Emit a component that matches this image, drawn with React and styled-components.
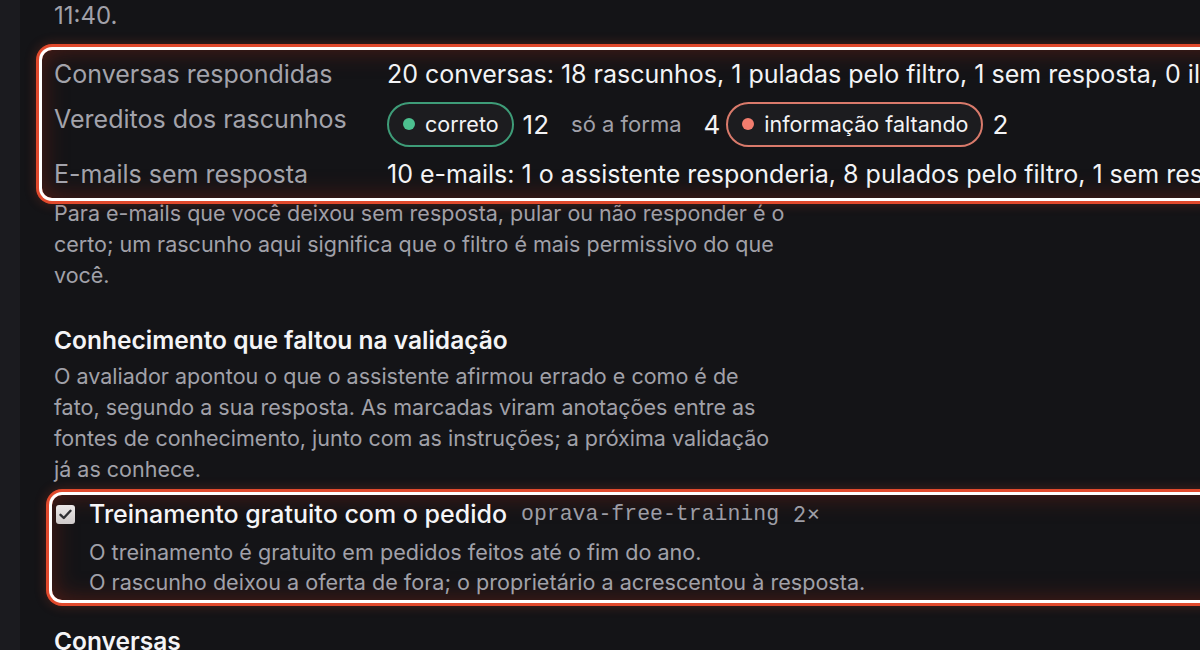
import React from "react";
import styled, { createGlobalStyle } from "styled-components";

const GlobalStyle = createGlobalStyle`
  html, body {
    margin: 0;
    padding: 0;
    background: #141417;
    overflow: hidden;
  }
  body {
    font-family: Inter, "Noto Sans", sans-serif;
    color: #f1f1f3;
  }
`;

const Shell = styled.div`
  display: flex;
  height: 650px;
`;

const Rail = styled.div`
  width: 20px;
  flex: none;
  background: #1b1b1f;
`;

const Main = styled.main`
  flex: none;
  width: 1500px;
  padding-left: 34px;
`;

// paragraphs keep the line breaks of the original page
const Text = styled.p`
  margin: ${(p) => p.$mt || 0}px 0 0;
  font-size: ${(p) => p.$size || 21.5}px;
  line-height: 31px;
  color: #a1a1a9;
  white-space: nowrap;
`;

const Heading = styled.h2`
  margin: ${(p) => p.$mt || 0}px 0 0;
  font-size: 24.5px;
  line-height: 31px;
  font-weight: 600;
  color: #f4f4f6;
`;

const Highlight = styled.div`
  position: relative;
  margin: ${(p) => p.$mt}px 0 0 ${(p) => -p.$pl}px;
  padding: ${(p) => p.$pad};
  border-radius: 10px;
  box-shadow: 0 0 0 3px #ffffff, 0 0 0 6px #e14a2d,
    0 0 12px 6px rgba(225, 74, 45, 0.25),
    inset 0 0 24px rgba(140, 35, 20, 0.5);
`;

const Stats = styled.div`
  display: grid;
  grid-template-columns: 333px auto;
  grid-template-rows: 36px 58px 36px;
  row-gap: 3px;
  align-items: center;
  white-space: nowrap;
`;

const Label = styled.div`
  font-size: 25px;
  color: #a3a3ab;
  align-self: ${(p) => (p.$up ? "start" : "center")};
  padding-top: ${(p) => (p.$up ? "9px" : "0")};
`;

const Value = styled.div`
  font-size: 25px;
  color: #f3f3f5;
`;

const Verdicts = styled.div`
  display: flex;
  align-items: center;
  gap: 6px;
`;

const Verdict = styled.div`
  display: flex;
  align-items: center;
`;

const Chip = styled.span`
  display: inline-flex;
  align-items: center;
  gap: 10px;
  height: 45px;
  box-sizing: border-box;
  padding: 0 ${(p) => (p.$tone ? 13 : 11)}px 0 14px;
  border-radius: 23px;
  border: 2px solid ${(p) => p.$tone || "transparent"};
  background: ${(p) => (p.$tone ? "#1c1c1f" : "transparent")};
  font-size: ${(p) => (p.$tone ? 21.5 : 22)}px;
  color: ${(p) => (p.$tone ? "#f3f3f5" : "#a1a1a9")};
`;

const Dot = styled.i`
  width: 12px;
  height: 12px;
  border-radius: 50%;
  background: ${(p) => p.$color};
`;

const Count = styled.span`
  margin-left: 9px;
  font-size: 26px;
  color: #f3f3f5;
`;

const FactHead = styled.div`
  display: flex;
  align-items: center;
  height: 36px;
  white-space: nowrap;
`;

const Check = styled.span`
  width: 19px;
  height: 19px;
  flex: none;
  margin-right: 14px;
  border-radius: 3px;
  background: linear-gradient(#ece8e8, #cfcaca);
  display: flex;
  align-items: center;
  justify-content: center;
`;

const FactTitle = styled.span`
  font-size: 25px;
  font-weight: 500;
  color: #f5f5f7;
`;

const Slug = styled.code`
  margin-left: 14px;
  font-family: "Liberation Mono", monospace;
  font-size: 21.5px;
  color: #9d9da5;
`;

const Times = styled.span`
  margin-left: 14px;
  font-size: 21.5px;
  color: #9d9da5;
`;

const FactBody = styled.div`
  margin: 5px 0 0 33px;
  font-size: 21.6px;
  line-height: 30px;
  color: #a1a1a9;
  white-space: nowrap;
`;

export default function App() {
  return (
    <>
      <GlobalStyle />
      <Shell>
        <Rail />
        <Main>
          <Text $size={24}>11:40.</Text>

          <Highlight $mt={19} $pl={12} $pad="6px 12px 6px">
            <Stats>
              <Label>Conversas respondidas</Label>
              <Value>
                20 conversas: 18 rascunhos, 1 puladas pelo filtro, 1 sem resposta, 0 ilegíveis
              </Value>
              <Label $up>Vereditos dos rascunhos</Label>
              <Verdicts>
                <Verdict>
                  <Chip $tone="#3e9c78">
                    <Dot $color="#4cc08f" />
                    correto
                  </Chip>
                  <Count>12</Count>
                </Verdict>
                <Verdict>
                  <Chip>só a forma</Chip>
                  <Count>4</Count>
                </Verdict>
                <Verdict>
                  <Chip $tone="#d97a6b">
                    <Dot $color="#f27d6e" />
                    informação faltando
                  </Chip>
                  <Count>2</Count>
                </Verdict>
              </Verdicts>
              <Label>E-mails sem resposta</Label>
              <Value>
                10 e-mails: 1 o assistente responderia, 8 pulados pelo filtro, 1 sem resposta
              </Value>
            </Stats>
          </Highlight>

          <Text>
            Para e-mails que você deixou sem resposta, pular ou não responder é o
            <br />
            certo; um rascunho aqui significa que o filtro é mais permissivo do que
            <br />
            você.
          </Text>

          <Heading $mt={34}>Conhecimento que faltou na validação</Heading>
          <Text $mt={5}>
            O avaliador apontou o que o assistente afirmou errado e como é de
            <br />
            fato, segundo a sua resposta. As marcadas viram anotações entre as
            <br />
            fontes de conhecimento, junto com as instruções; a próxima validação
            <br />
            já as conhece.
          </Text>

          <Highlight $mt={10} $pl={2} $pad="1px 4px 3px">
            <FactHead>
              <Check>
                <svg width="13" height="11" viewBox="0 0 13 11" fill="none">
                  <path
                    d="M1.5 5.8 4.8 9 11.5 1.8"
                    stroke="#2f2f33"
                    strokeWidth="2.4"
                    strokeLinecap="round"
                    strokeLinejoin="round"
                  />
                </svg>
              </Check>
              <FactTitle>Treinamento gratuito com o pedido</FactTitle>
              <Slug>oprava-free-training</Slug>
              <Times>2×</Times>
            </FactHead>
            <FactBody>
              O treinamento é gratuito em pedidos feitos até o fim do ano.
              <br />
              O rascunho deixou a oferta de fora; o proprietário a acrescentou à resposta.
            </FactBody>
          </Highlight>

          <Heading $mt={26}>Conversas</Heading>
        </Main>
      </Shell>
    </>
  );
}
